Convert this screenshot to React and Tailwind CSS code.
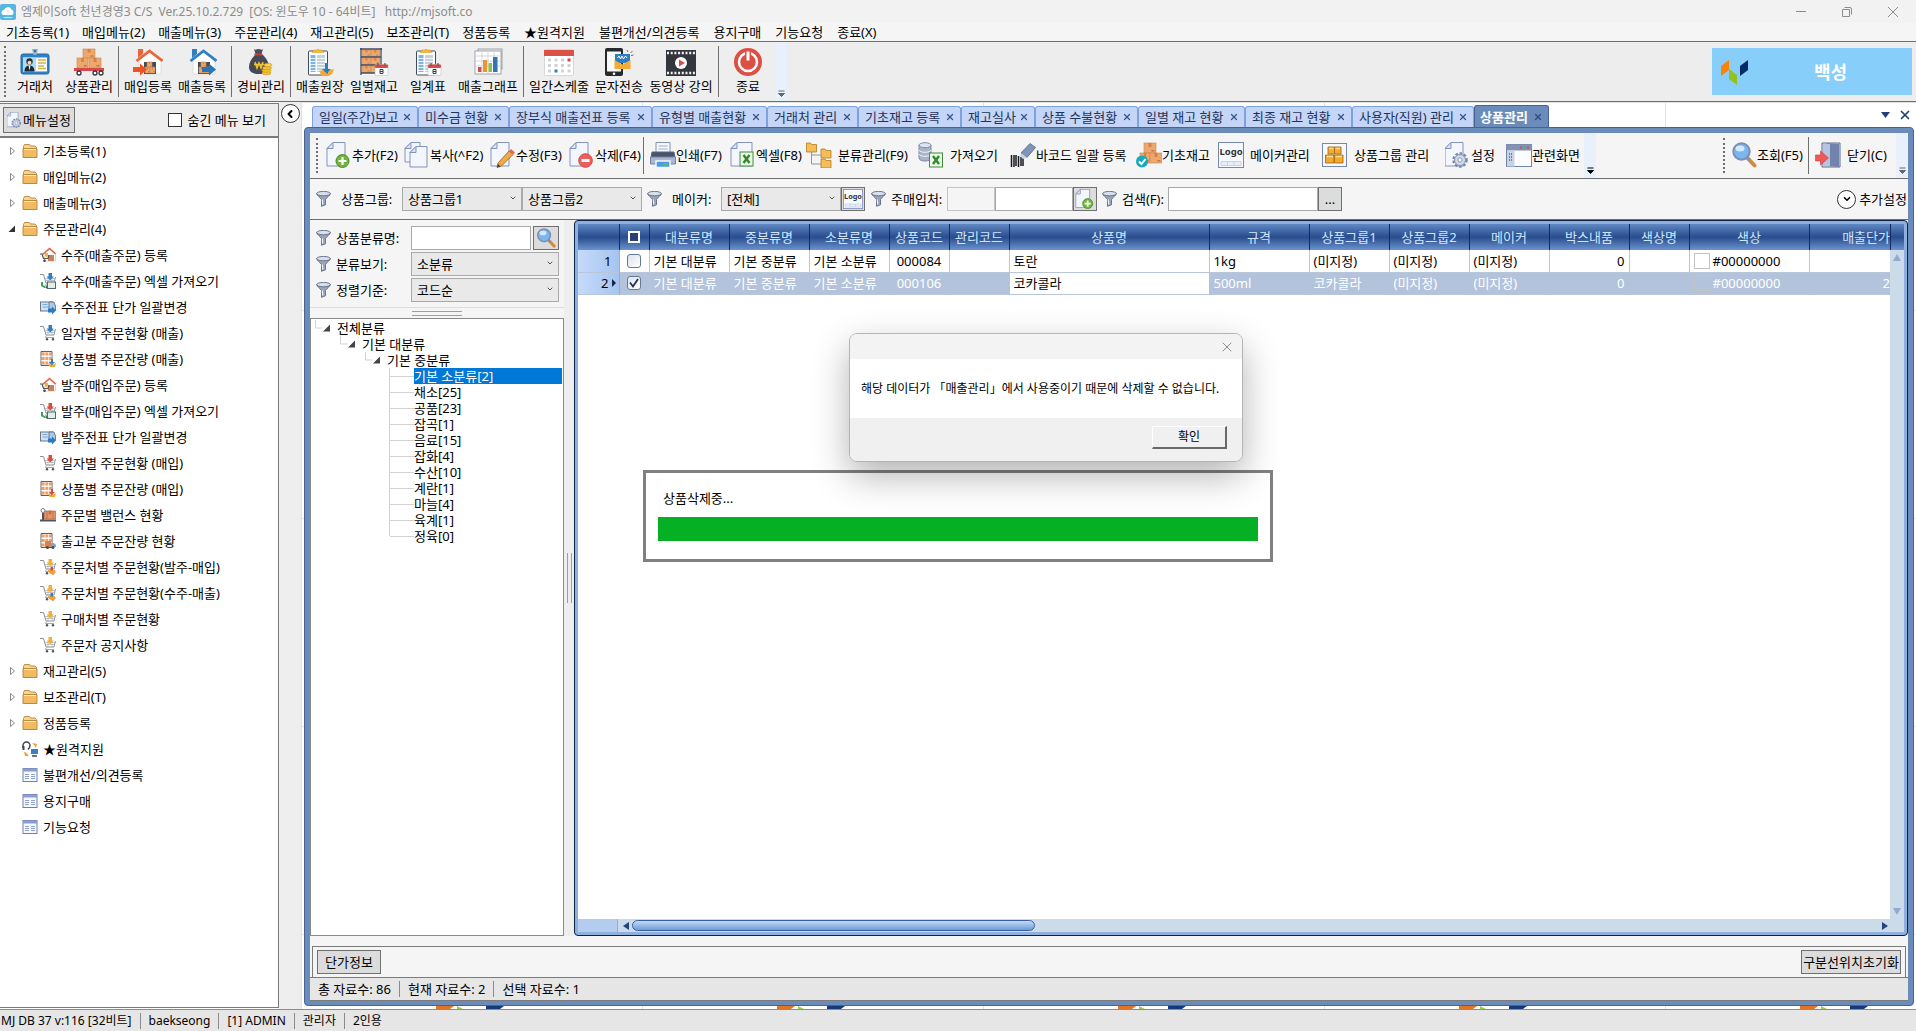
import React from 'react';
import { ChevronDown, ChevronLeft, X } from 'lucide-react';

const TITLE_MENUS = [
  { label: '기초등록(1)', gap: 'mr-[13px]' },
  { label: '매입메뉴(2)', gap: 'mr-[13px]' },
  { label: '매출메뉴(3)', gap: 'mr-[13px]' },
  { label: '주문관리(4)', gap: 'mr-[13px]' },
  { label: '재고관리(5)', gap: 'mr-[13px]' },
  { label: '보조관리(T)', gap: 'mr-[13px]' },
  { label: '정품등록', gap: 'mr-[14px]' },
  { label: '★원격지원', gap: 'mr-[14px]' },
  { label: '불편개선/의견등록', gap: 'mr-[14px]' },
  { label: '용지구매', gap: 'mr-[14px]' },
  { label: '기능요청', gap: 'mr-[14px]' },
  { label: '종료(X)', gap: 'mr-0' },
];

/* ---------- main toolbar icons (30 x 28) ---------- */

function Box({ x, y, w, h }) {
  return (
    <g>
      <rect x={x} y={y} width={w} height={h} fill="#eda86c" stroke="#c98550" strokeWidth="0.6" />
      <rect x={x + w * 0.38} y={y} width={w * 0.24} height={h * 0.4} fill="#d97f4c" />
      <rect x={x + w * 0.62} y={y + h * 0.72} width={w * 0.25} height={h * 0.12} fill="#b86a3c" />
    </g>
  );
}

function Calendar({ x, y }) {
  return (
    <g>
      <rect x={x} y={y} width="13" height="11" rx="1" fill="#fff" stroke="#b9bcc4" strokeWidth="0.6" />
      <rect x={x} y={y} width="13" height="3.5" rx="1" fill="#dc4a43" />
      <path d={`M${x + 3} ${y - 1.5}v3M${x + 10} ${y - 1.5}v3`} stroke="#555b66" strokeWidth="1.2" />
      <path d={`M${x + 5} ${y + 5}h3v4h-3zM${x + 5} ${y + 7}h3`} stroke="#3c414c" fill="none" />
    </g>
  );
}

function Clipboard() {
  return (
    <g>
      <rect x="3.5" y="3" width="19" height="24" rx="1" fill="#fff" stroke="#3d4a5f" />
      <rect x="5.5" y="7" width="5" height="17" fill="#7fb6e0" />
      <rect x="12" y="7" width="8" height="17" fill="#c6d1dc" />
      <path d="M5 10.500h16M5 13.500h16M5 16.500h16M5 19.500h16M5 22.500h16" stroke="#fff" strokeWidth="0.8" />
      <path d="M7 4.500l2-2.500h2.500a2 2 0 0 1 3 0H17l2 2.500z" fill="#f7b733" stroke="#d99519" strokeWidth="0.5" />
    </g>
  );
}

function House({ color, arrow, arrowX }) {
  return (
    <g>
      <path d="M6 12L17 3l11 9v14H6z" fill="#fff" stroke="#c9ccd1" strokeWidth="0.6" />
      <path d="M11 14h12v12H11z" fill="#434a58" />
      <Box x={12} y={19} w={5} h={6} />
      <Box x={17} y={19} w={5} h={6} />
      <Box x={14} y={14} w={5} h={5} />
      <path d="M5 1h5v5l-5 4z" fill={color} />
      <path d="M3.500 13L16.500 3l13 10" fill="none" stroke={color} strokeWidth="2.800" />
      <path d={`M${arrowX} 19h7v-3.500l7 6-7 6V24h-7z`} fill={arrow} />
    </g>
  );
}

const mainIcons = {
  card: (
    <g>
      <rect x="1" y="6" width="28" height="20" rx="2" fill="#2f83c4" stroke="#1f6aa8" />
      <rect x="3" y="9.500" width="24" height="14" fill="#f4fafd" />
      <rect x="3" y="9.500" width="13" height="14" fill="#a9dcf5" />
      <circle cx="9.500" cy="13.500" r="3.200" fill="#2b2b30" />
      <circle cx="9.500" cy="14.800" r="2" fill="#f6d3b6" />
      <path d="M4.500 23.500c0-4 2-6 5-6s5 2 5 6z" fill="#1d2833" />
      <path d="M8.500 17.500h2l-1 5z" fill="#fff" />
      <path d="M18 12h8M18 15h8M18 18h6M18 20.500h8" stroke="#d3b34c" strokeWidth="1.300" />
      <path d="M12 1h6l-1.500 6h-3z" fill="#8fb7d4" />
      <circle cx="15" cy="3" r="1.200" fill="#2f6f9f" />
    </g>
  ),
  boxes: (
    <g>
      <Box x={9} y={1} w={12} h={9} />
      <Box x={3} y={10} w={11} h={10} />
      <Box x={15} y={10} w={12} h={10} />
      <path d="M0 21.500h30" stroke="#d8484d" strokeWidth="3" />
      <circle cx="5" cy="25" r="2" fill="#fff" stroke="#33363d" strokeWidth="1.300" />
      <circle cx="21" cy="25" r="2" fill="#fff" stroke="#33363d" strokeWidth="1.300" />
      <circle cx="27" cy="25" r="2" fill="#fff" stroke="#33363d" strokeWidth="1.300" />
    </g>
  ),
  houseIn: <House color="#e9663a" arrow="#ee5328" arrowX={0} />,
  houseOut: <House color="#2f7fc1" arrow="#2477bd" arrowX={15} />,
  money: (
    <g>
      <path d="M8 1c2 1.500 3 0 4.500 0s3 1.500 4.500 0L15.500 6h-6z" fill="#4b4f5c" />
      <path d="M9 7h8c4 4 6 8 6 12 0 5-4 7-10 7S3 24 3 19c0-4 2-8 6-12z" fill="#464a57" />
      <path d="M8.500 6.500h8" stroke="#c93f3f" strokeWidth="1.800" />
      <path d="M9 14l2 6 2-5 2 5 2-6M8 16.500h10" fill="none" stroke="#f3c331" strokeWidth="1.500" />
      <ellipse cx="20.500" cy="25" rx="4.500" ry="1.800" fill="#f1c232" stroke="#c8961a" strokeWidth="0.6" />
      <ellipse cx="20.500" cy="22.500" rx="4.500" ry="1.800" fill="#f1c232" stroke="#c8961a" strokeWidth="0.6" />
      <ellipse cx="21" cy="20" rx="4.500" ry="1.800" fill="#f1c232" stroke="#c8961a" strokeWidth="0.6" />
      <ellipse cx="22" cy="17" rx="4" ry="1.800" fill="#f6d152" stroke="#c8961a" strokeWidth="0.6" />
    </g>
  ),
  ledger: (
    <g>
      <Clipboard />
      <path d="M20 15h3v6h3l-4.500 5-4.500-5h3z" fill="#2a7cc0" />
      <path d="M14 23l4-1 4 4 3-4 4-1-2 5-5 3-5-1z" fill="#f5a72f" />
    </g>
  ),
  shelf: (
    <g>
      <rect x="2" y="0.500" width="20" height="26" fill="#fff" />
      {[2, 10, 18].map((y) => (
        <g key={y}>
          <Box x={3.5} y={y} w={8} h={6.5} />
          <Box x={12} y={y} w={8.5} h={6.5} />
        </g>
      ))}
      <path d="M2 0v27M22 0v27M1 1h22M2 9h20M2 17h20M2 25h20" stroke="#3f4a5c" strokeWidth="1.300" />
      <Calendar x={16} y={16.5} />
    </g>
  ),
  daily: (
    <g>
      <Clipboard />
      <Calendar x={15} y={16.5} />
    </g>
  ),
  graph: (
    <g>
      <rect x="5" y="1" width="24" height="20" fill="#e9ebee" stroke="#8c9099" strokeWidth="0.8" />
      <rect x="2" y="3" width="26" height="23" fill="#fff" stroke="#8c9099" strokeWidth="0.8" />
      <path d="M3 8h24M3 13h24M3 18h24M9 4v21M15 4v21M21 4v21" stroke="#c9cfd8" strokeWidth="0.8" />
      <rect x="5" y="19" width="3.500" height="5" fill="#dd4b43" />
      <rect x="10" y="12" width="4" height="12" fill="#f0952e" />
      <rect x="15.500" y="15" width="3.500" height="9" fill="#8ac249" />
      <rect x="20" y="9" width="4.500" height="15" fill="#3173b5" />
    </g>
  ),
  schedule: (
    <g>
      <rect x="0.500" y="1.500" width="29" height="26" rx="1" fill="#fff" stroke="#d5d7da" />
      <path d="M0 2h30v6H0z" fill="#dd5048" />
      {[10.5, 16, 21.5].map((y, r) =>
        [4, 10.5, 17, 23.5].map((x, c) => (
          <rect
            key={`${r}${c}`}
            x={x}
            y={y}
            width="3"
            height="3"
            fill={r === 0 && c === 3 ? '#d3453e' : r === 2 && c === 1 ? '#2f7fc1' : '#cfd2d6'}
          />
        ))
      )}
    </g>
  ),
  phone: (
    <g>
      <rect x="1" y="0" width="18" height="28" rx="2" fill="#26282c" />
      <rect x="3" y="3.500" width="14" height="20" fill="#f7f9fb" />
      <circle cx="10" cy="25.800" r="1.300" fill="#fff" />
      <rect x="11" y="6" width="15" height="9" fill="#2f7cc4" />
      <path d="M10.500 12l8 4.500 8-4.500v9h-16z" fill="#f4ac34" />
      <path d="M13.500 10l1.500-2 1.500 3 1.500-3 1.500 3 2-3 1.500 2" fill="none" stroke="#fff" strokeWidth="1" />
      <path d="M24 4l-1-2M26.500 5l2-2M27 7.500l2.500-.5" stroke="#6c7078" />
    </g>
  ),
  film: (
    <g>
      <rect x="0" y="2" width="30" height="26" fill="#33363c" />
      <path d="M1 5h28M1 25h28" stroke="#f4f4f4" strokeWidth="2.500" strokeDasharray="2 1.700" />
      <circle cx="15" cy="15" r="6" fill="#fff" />
      <path d="M13 11.500l6 3.500-6 3.500z" fill="#dd4b43" />
    </g>
  ),
  power: (
    <g>
      <circle cx="15" cy="14" r="14" fill="#dd4f45" />
      <circle cx="15" cy="14" r="9" fill="none" stroke="#fff" strokeWidth="2.500" />
      <path d="M12 2h6v10h-6z" fill="#dd4f45" />
      <path d="M15 3.500v9" stroke="#fff" strokeWidth="3" />
    </g>
  ),
};

const MAIN_TOOLS = [
  [{ label: '거래처', icon: 'card', w: 'w-[54px]' }, { label: '상품관리', icon: 'boxes', w: 'w-[54px]' }],
  [{ label: '매입등록', icon: 'houseIn', w: 'w-[54px]' }, { label: '매출등록', icon: 'houseOut', w: 'w-[54px]' }],
  [{ label: '경비관리', icon: 'money', w: 'w-[54px]' }],
  [
    { label: '매출원장', icon: 'ledger', w: 'w-[54px]' },
    { label: '일별재고', icon: 'shelf', w: 'w-[54px]' },
    { label: '일계표', icon: 'daily', w: 'w-[54px]' },
    { label: '매출그래프', icon: 'graph', w: 'w-[66px]' },
  ],
  [
    { label: '일간스케줄', icon: 'schedule', w: 'w-[66px]' },
    { label: '문자전송', icon: 'phone', w: 'w-[54px]' },
    { label: '동영상 강의', icon: 'film', w: 'w-[70px]' },
  ],
  [{ label: '종료', icon: 'power', w: 'w-[54px]' }],
];

/* ---------- document toolbar icons (26 x 26) ---------- */

function Page({ x = 1, y = 0, w = 18, h = 24 }) {
  return (
    <g>
      <path
        d={`M${x + 6} ${y + 0.5}H${x + w}V${y + h}H${x}V${y + 6.5}z`}
        fill="#f3f6fc"
        stroke="#8493bd"
      />
      <path d={`M${x + 6} ${y + 0.5}v6h-6z`} fill="#dbe3f3" stroke="#8493bd" />
    </g>
  );
}

function ExcelBadge({ x, y }) {
  return (
    <g>
      <rect x={x} y={y} width="13" height="14" fill="#eef8ea" stroke="#3f8f35" />
      <path d={`M${x + 3.5} ${y + 3}l6 8M${x + 9.5} ${y + 3}l-6 8`} stroke="#2f8a2a" strokeWidth="2.400" />
    </g>
  );
}

function FolderShape({ x, y }) {
  return (
    <path
      d={`M${x} ${y}h4l1 1.500h5v7.500h-10z`}
      fill="#f4bd55"
      stroke="#b47a26"
      strokeWidth="0.8"
    />
  );
}

function Gear({ cx, cy, r }) {
  return (
    <g>
      <circle cx={cx} cy={cy} r={r} fill="none" stroke="#7787ab" strokeWidth="2.500" strokeDasharray="2.500 1.700" />
      <circle cx={cx} cy={cy} r={r - 1} fill="#d3daea" stroke="#8291b3" />
      <circle cx={cx} cy={cy} r={r / 3} fill="#fff" stroke="#8291b3" />
    </g>
  );
}

function Lens() {
  return (
    <g>
      <path d="M17 16.500l6.500 7" stroke="#d8893a" strokeWidth="4" strokeLinecap="round" />
      <path d="M16 15.500l3 3" stroke="#8892a8" strokeWidth="3" />
      <circle cx="10.500" cy="9.500" r="8.200" fill="#79b7ee" stroke="#7d8fb6" strokeWidth="2" />
      <ellipse cx="9" cy="6.500" rx="4.500" ry="3" fill="#e3f3ff" opacity="0.85" />
    </g>
  );
}

function LogoSheet() {
  return (
    <g>
      <rect x="0.500" y="0.500" width="25" height="25" fill="#f7f9fd" stroke="#7786ae" />
      <path d="M3 19.500h20v4H3zM9.500 19.500v4M16 19.500v4" fill="#e7eefa" stroke="#c5d2ea" />
      <text x="13" y="13" textAnchor="middle" fontSize="9.500" fontWeight="700" fill="#333">
        Logo
      </text>
    </g>
  );
}

const docIcons = {
  add: (
    <g>
      <Page />
      <circle cx="16.500" cy="19" r="6.500" fill="#6fb53a" stroke="#4b8d25" />
      <path d="M16.500 15v8M12.500 19h8" stroke="#fff" strokeWidth="2.200" />
    </g>
  ),
  copy: (
    <g>
      <Page x={1} y={0} w={15} h={20} />
      <Page x={6} y={4} w={17} h={21} />
    </g>
  ),
  edit: (
    <g>
      <Page />
      <path d="M8 21L19 9l4 3.500L11.500 24 7 25.500z" fill="#f0a848" stroke="#a86a2b" strokeWidth="0.9" />
      <path d="M19 9l2-2 4 3.500-2 2z" fill="#e06b52" />
      <path d="M7 25.500l1-3.500 2.500 2.500z" fill="#4a3a2c" />
    </g>
  ),
  remove: (
    <g>
      <Page />
      <circle cx="16.500" cy="18.500" r="6.800" fill="#ee5f5b" stroke="#d04846" />
      <path d="M12.500 18.500h8" stroke="#fff" strokeWidth="3" />
    </g>
  ),
  print: (
    <g>
      <path d="M6 0.500h14v11H6z" fill="#f5f8fd" stroke="#8593b5" />
      <path d="M8.500 4h9M8.500 7h9" stroke="#a4afc8" />
      <path d="M2 10h22l1.500 9h-25z" fill="#4a5468" stroke="#59657f" />
      <path d="M0.500 15h25v7h-25z" fill="#a9b7d3" stroke="#74829f" />
      <path d="M6 19h14v6.500H6z" fill="#4f9be2" stroke="#f4f7fb" strokeWidth="1.500" />
      <path d="M13 21h5v3h-5z" fill="#5cb27a" />
    </g>
  ),
  excel: (
    <g>
      <Page x={1} y={0} w={21} h={24} />
      <ExcelBadge x={10} y={10} />
    </g>
  ),
  tree: (
    <g>
      <path d="M5.500 10v12H16M5.500 13H16" fill="none" stroke="#8b93a5" />
      <FolderShape x={0.5} y={1} />
      <FolderShape x={15} y={7} />
      <FolderShape x={15} y={17} />
    </g>
  ),
  db: (
    <g>
      <path d="M1 3v13c0 4 12 4 12 0V3z" fill="#a9b4c9" stroke="#7f8ba6" />
      <ellipse cx="7" cy="3.200" rx="6" ry="2.500" fill="#dde4f0" stroke="#7f8ba6" />
      <path d="M1 8c0 3 12 3 12 0M1 12c0 3 12 3 12 0" fill="none" stroke="#f2f5fa" />
      <ExcelBadge x={11.5} y={11} />
    </g>
  ),
  barcode: (
    <g>
      <path d="M1.500 13v12M4 13v12M6 13v11M8.500 14v11M11 15v9M13 16v8" stroke="#17191d" strokeWidth="1.500" />
      <path d="M11 11L20 1.500l5.500 4-8.500 10z" fill="#8094bb" stroke="#667899" />
      <path d="M11 11l6 4.500-4 1.500-3-3z" fill="#c9d2e4" />
    </g>
  ),
  stock: (
    <g>
      <Box x={8} y={1} w={12} h={10} />
      <Box x={4} y={11} w={10} h={10} />
      <Box x={14} y={11} w={12} h={10} />
      <circle cx="6" cy="19.500" r="6" fill="#17a9c2" />
      <path d="M3 19.500l2.500 2.500L9.500 17" fill="none" stroke="#fff" strokeWidth="2" />
    </g>
  ),
  logo: <LogoSheet />,
  group: (
    <g>
      <rect x="0.500" y="1.500" width="24" height="23" fill="#f7f9fd" stroke="#7786ae" />
      <path d="M6 5h6.500v7H6zM12.500 5H19v7h-6.500zM3.500 13h8.500v8H3.500zM12.500 13H21v8h-8.500z" fill="#f2ab2e" stroke="#a96b15" strokeWidth="0.9" />
      <path d="M7 6.500h4.500M13.500 6.500H18M4.500 14.500h6.500M13.500 14.500H20" stroke="#fbdc8e" strokeWidth="1.300" />
    </g>
  ),
  setting: (
    <g>
      <Page x={0} />
      <Gear cx={15} cy={18} r={6.5} />
    </g>
  ),
  screen: (
    <g>
      <rect x="0.500" y="2.500" width="25" height="22" fill="#fbfdff" stroke="#7283a8" />
      <rect x="0.500" y="2.500" width="25" height="6" fill="#8393b5" />
      <rect x="1" y="8.500" width="7.500" height="16" fill="#c9d3e6" />
      <path d="M3 12h4M3 15h4M3 18h4" stroke="#54617f" strokeWidth="1.500" strokeDasharray="1 1" />
      <circle cx="15" cy="5.500" r="1.200" fill="#d9524b" />
      <circle cx="18.500" cy="5.500" r="1.200" fill="#5cb15a" />
      <circle cx="22" cy="5.500" r="1.200" fill="#d9524b" />
    </g>
  ),
  search: <Lens />,
  exit: (
    <g>
      <path d="M7 1h18v24H7z" fill="#dfe5f2" stroke="#5d6b90" />
      <path d="M12 1l12 1v23l-12-1z" fill="#7182ab" />
      <path d="M8 2h7v22H8z" fill="#b7c3df" />
      <path d="M0.500 13h5V9l8 7-8 7v-4h-5z" fill="#ee5856" stroke="#cf3f3e" strokeWidth="0.6" />
    </g>
  ),
};

const DOC_TOOLS = [
  { label: '추가(F2)', icon: 'add', w: 'w-[78px]' },
  { label: '복사(^F2)', icon: 'copy', w: 'w-[86px]' },
  { label: '수정(F3)', icon: 'edit', w: 'w-[79px]' },
  { label: '삭제(F4)', icon: 'remove', w: 'w-[74px]', sep: true },
  { label: '인쇄(F7)', icon: 'print', w: 'w-[80px]' },
  { label: '엑셀(F8)', icon: 'excel', w: 'w-[76px]' },
  { label: '분류관리(F9)', icon: 'tree', w: 'w-[112px]', wide: true },
  { label: '가져오기', icon: 'db', w: 'w-[92px]', wide: true },
  { label: '바코드 일괄 등록', icon: 'barcode', w: 'w-[126px]' },
  { label: '기초재고', icon: 'stock', w: 'w-[82px]' },
  { label: '메이커관리', icon: 'logo', w: 'w-[104px]', wide: true },
  { label: '상품그룹 관리', icon: 'group', w: 'w-[123px]', wide: true },
  { label: '설정', icon: 'setting', w: 'w-[61px]' },
  { label: '관련화면', icon: 'screen', w: 'w-[78px]' },
];

/* ---------- side menu icons (16 x 16) ---------- */

function Cart({ arrow }) {
  return (
    <g>
      <path d="M0 1.500h3.500l2.500 8.500h8l1.500-6" fill="none" stroke="#8a919c" />
      <path d="M5 5.500h10M5.500 7.500h9M8 5v5M12 5v5" stroke="#a9afb8" strokeWidth="0.7" />
      <path d="M6.500 10.500L5.500 12.500H14" fill="none" stroke="#8a919c" strokeWidth="0.8" />
      <circle cx="7" cy="14.200" r="1.200" fill="#4c525c" />
      <circle cx="13" cy="14.200" r="1.200" fill="#4c525c" />
      <path d="M8.500 0h3.500v3.500h2L10.200 7.500 6.500 3.500h2z" fill={arrow} />
    </g>
  );
}

function Rack() {
  return (
    <g>
      <path d="M1 0.500h11v14H1z" fill="#fbe9dc" stroke="#5a6271" />
      <path d="M2 1.500h9v3H2zM2 6h9v3H2zM2 10.500h9v3H2z" fill="#eea06b" />
      <path d="M1 5.200h11M1 9.700h11M5 1v13M8.500 1v13" stroke="#fff" strokeWidth="0.7" />
    </g>
  );
}

const menuIcons = {
  folder: (
    <g>
      <path d="M1.500 3.500l1-2h5l1 1.500h4.500l1.500 1.500V14h-13z" fill="#f8d68f" stroke="#b98238" strokeWidth="0.9" />
      <path d="M1 5.500h14v9H1z" fill="#f0bb62" stroke="#b98238" strokeWidth="0.9" />
      <path d="M2 6.500h12" stroke="#fdeac1" />
    </g>
  ),
  houseCart: (
    <g>
      <path d="M4 7l6-5 5.500 5v7H5z" fill="#fff" stroke="#c3c7cc" strokeWidth="0.7" />
      <path d="M2.500 7.500L9.500 1.500l6 5.500" fill="none" stroke="#e56142" strokeWidth="1.600" />
      <path d="M8 8h6v6H8z" fill="#c98157" />
      <path d="M0 7h2l1.500 4.500h4.500L9 8" fill="none" stroke="#4f5560" strokeWidth="1.200" />
      <circle cx="4.500" cy="13.800" r="1.300" fill="#3e434c" />
      <path d="M5 6h3v3l-1.500 1.500L5 9z" fill="#f4b23a" />
    </g>
  ),
  excelSale: (
    <g>
      <Cart arrow="#2f7fc1" />
      <rect x="7.500" y="9" width="8" height="6.500" fill="#dff0e4" stroke="#58656b" />
      <path d="M2 9v3.500l3.500 2" fill="none" stroke="#35a457" strokeWidth="2" />
    </g>
  ),
  excelBuy: (
    <g>
      <Cart arrow="#dc4b3e" />
      <rect x="7.500" y="9" width="8" height="6.500" fill="#dff0e4" stroke="#58656b" />
      <path d="M2 9v3.500l3.500 2" fill="none" stroke="#35a457" strokeWidth="2" />
    </g>
  ),
  price: (
    <g>
      <rect x="0.500" y="3" width="12" height="9" fill="#cfe3f6" stroke="#6c7684" />
      <path d="M2.500 5.500h5M2.500 8h6" stroke="#7aa9d6" />
      <path d="M9 3h5l1.500 4v4.500H9z" fill="#a9c9e8" stroke="#5d6673" strokeWidth="0.8" />
      <path d="M8 9.500h4V7.500l4 4-4 4V13.500H8z" fill="#2a79c2" />
    </g>
  ),
  cartSale: <Cart arrow="#2f7fc1" />,
  cartBuy: <Cart arrow="#dc4b3e" />,
  cartYellow: <Cart arrow="#f5b02f" />,
  cartHandRed: (
    <g>
      <Cart arrow="#f5b02f" />
      <path d="M8 11l3-1 3.500 1 1.500 2-3 3-4-2z" fill="#f2a03a" />
      <path d="M10.500 8h2.500v3.500h-2.500z" fill="#dc4b3e" />
    </g>
  ),
  cartHandBlue: (
    <g>
      <Cart arrow="#f5b02f" />
      <path d="M8 11l3-1 3.500 1 1.500 2-3 3-4-2z" fill="#f2a03a" />
      <path d="M10.500 8h2.500v3.500h-2.500z" fill="#2f7fc1" />
    </g>
  ),
  rackSale: (
    <g>
      <Rack />
      <path d="M11 8h2v3h2l-3 3-3-3h2z" fill="#2f7fc1" />
      <path d="M8 13l4 1.500 4-2.500-1 4h-5z" fill="#f5a72f" />
    </g>
  ),
  rackBuy: (
    <g>
      <Rack />
      <path d="M11 8h2v3h2l-3 3-3-3h2z" fill="#dc4b3e" />
      <path d="M8 13l4 1.500 4-2.500-1 4h-5z" fill="#f5a72f" />
    </g>
  ),
  balance: (
    <g>
      <path d="M4.500 4h11v8h-11z" fill="#e3966a" stroke="#b3663e" strokeWidth="0.7" />
      <path d="M9 4h2v3H9zM7 4v8M13 4v8" stroke="#c4734a" fill="#c4734a" />
      <circle cx="3" cy="3.500" r="2" fill="#fff" stroke="#777e8a" />
      <path d="M3 6v7M0 13.500h16" stroke="#4e5562" strokeWidth="2" />
    </g>
  ),
  rackTruck: (
    <g>
      <Rack />
      <path d="M5 8h6v6H5z" fill="#de8150" />
      <path d="M11 10h3l2 2v2h-5z" fill="#7fa8c8" />
      <circle cx="7.500" cy="14.500" r="1.500" fill="#434953" />
      <circle cx="13" cy="14.500" r="1.500" fill="#434953" />
    </g>
  ),
  remote: (
    <g>
      <path d="M1 7V4.500a3.500 3.500 0 0 1 7 0c0 2-1 3-2 4" fill="none" stroke="#3e4450" strokeWidth="1.500" />
      <path d="M0.500 5h2v4h-2z" fill="#3e4450" />
      <path d="M10 2l5 1-1 4-1.500-2.500z" fill="#f2a03a" />
      <path d="M2 11l2 .5L7 15H3z" fill="#f2a03a" />
      <rect x="9" y="8" width="7" height="5" fill="#3b7fc0" />
      <path d="M10 15h5" stroke="#3e4450" strokeWidth="1.500" />
    </g>
  ),
  window: (
    <g>
      <rect x="1" y="1.500" width="14" height="13" fill="#f6f9ff" stroke="#6d80b4" />
      <rect x="1" y="1.500" width="14" height="3" fill="#8c9ecb" />
      <path d="M3 7.500h4M3 9.500h4M3 11.500h4M9 7.500h4M9 9.500h4M9 11.500h4" stroke="#8fa0c9" />
    </g>
  ),
};

const SIDE_MENU = [
  { label: '기초등록(1)', icon: 'folder', state: 'closed' },
  { label: '매입메뉴(2)', icon: 'folder', state: 'closed' },
  { label: '매출메뉴(3)', icon: 'folder', state: 'closed' },
  {
    label: '주문관리(4)',
    icon: 'folder',
    state: 'open',
    children: [
      { label: '수주(매출주문) 등록', icon: 'houseCart' },
      { label: '수주(매출주문) 엑셀 가져오기', icon: 'excelSale' },
      { label: '수주전표 단가 일괄변경', icon: 'price' },
      { label: '일자별 주문현황 (매출)', icon: 'cartSale' },
      { label: '상품별 주문잔량 (매출)', icon: 'rackSale' },
      { label: '발주(매입주문) 등록', icon: 'houseCart' },
      { label: '발주(매입주문) 엑셀 가져오기', icon: 'excelBuy' },
      { label: '발주전표 단가 일괄변경', icon: 'price' },
      { label: '일자별 주문현황 (매입)', icon: 'cartBuy' },
      { label: '상품별 주문잔량 (매입)', icon: 'rackBuy' },
      { label: '주문별 밸런스 현황', icon: 'balance' },
      { label: '출고분 주문잔량 현황', icon: 'rackTruck' },
      { label: '주문처별 주문현황(발주-매입)', icon: 'cartHandRed' },
      { label: '주문처별 주문현황(수주-매출)', icon: 'cartHandBlue' },
      { label: '구매처별 주문현황', icon: 'cartYellow' },
      { label: '주문자 공지사항', icon: 'cartYellow' },
    ],
  },
  { label: '재고관리(5)', icon: 'folder', state: 'closed' },
  { label: '보조관리(T)', icon: 'folder', state: 'closed' },
  { label: '정품등록', icon: 'folder', state: 'closed' },
  { label: '★원격지원', icon: 'remote' },
  { label: '불편개선/의견등록', icon: 'window' },
  { label: '용지구매', icon: 'window' },
  { label: '기능요청', icon: 'window' },
];

const TABS = [
  { label: '일일(주간)보고', w: 'w-[106px]' },
  { label: '미수금 현황', w: 'w-[91px]' },
  { label: '장부식 매출전표 등록', w: 'w-[143px]' },
  { label: '유형별 매출현황', w: 'w-[115px]' },
  { label: '거래처 관리', w: 'w-[91px]' },
  { label: '기초재고 등록', w: 'w-[103px]' },
  { label: '재고실사', w: 'w-[74px]' },
  { label: '상품 수불현황', w: 'w-[103px]' },
  { label: '일별 재고 현황', w: 'w-[107px]' },
  { label: '최종 재고 현황', w: 'w-[107px]' },
  { label: '사용자(직원) 관리', w: 'w-[122px]' },
];

const CATEGORIES = [
  '기본 소분류[2]', '채소[25]', '공품[23]', '잡곡[1]', '음료[15]', '잡화[4]',
  '수산[10]', '계란[1]', '마늘[4]', '육계[1]', '정육[0]',
];

const COLUMNS = [
  { label: '대분류명', w: 'w-[80px]' },
  { label: '중분류명', w: 'w-[80px]' },
  { label: '소분류명', w: 'w-[80px]' },
  { label: '상품코드', w: 'w-[60px]', align: 'text-center' },
  { label: '관리코드', w: 'w-[60px]' },
  { label: '상품명', w: 'w-[200px]' },
  { label: '규격', w: 'w-[100px]' },
  { label: '상품그룹1', w: 'w-[80px]' },
  { label: '상품그룹2', w: 'w-[80px]' },
  { label: '메이커', w: 'w-[80px]' },
  { label: '박스내품', w: 'w-[80px]', align: 'text-right' },
  { label: '색상명', w: 'w-[60px]' },
  { label: '색상', w: 'w-[120px]', color: true },
];

const ROWS = [
  { cells: ['기본 대분류', '기본 중분류', '기본 소분류', '000084', '', '토란', '1kg', '(미지정)', '(미지정)', '(미지정)', '0', '', '#00000000'], price: '' },
  { cells: ['기본 대분류', '기본 중분류', '기본 소분류', '000106', '', '코카콜라', '500ml', '코카콜라', '(미지정)', '(미지정)', '0', '', '#00000000'], price: '2' },
];

function Grip({ className }) {
  return <div className={`w-0 border-l-2 border-dotted border-[#6f6f6f] ${className}`} />;
}

function Overflow({ dark }) {
  return (
    <div className="flex w-3 flex-col items-center justify-end rounded-r bg-[#e8f1fb] pb-1">
      <svg viewBox="0 0 7 7" className={dark ? 'h-[7px] w-[7px] text-black' : 'h-[7px] w-[7px] text-[#666]'}>
        <path d="M0.500 1h6M0.500 3.500h6l-3 3z" stroke="currentColor" strokeWidth="1" fill="currentColor" />
      </svg>
    </div>
  );
}

function Funnel() {
  return (
    <svg viewBox="0 0 15 16" className="h-4 w-[15px] shrink-0">
      <path d="M0.700 2.500c0 2 3.800 4 4.800 6v6.800l4-1.500V8.500c1-2 4.800-4 4.800-6z" fill="#9aa5bb" stroke="#5f6b84" strokeWidth="0.9" />
      <path d="M6.300 8.500l.4 5" stroke="#eef2f8" strokeWidth="1.200" />
      <ellipse cx="7.500" cy="2.600" rx="6.800" ry="2.200" fill="#d9dfeb" stroke="#5f6b84" strokeWidth="0.9" />
    </svg>
  );
}

function SelectBox({ id, label, value, className }) {
  return (
    <div className={`relative h-6 ${className}`}>
      <select
        id={id}
        aria-label={label}
        className="h-6 w-full appearance-none border border-[#a9a9a9] bg-[#e9e9e9] pl-[5px] text-[13px] leading-5 text-black"
      >
        <option>{value}</option>
      </select>
      <ChevronDown className="pointer-events-none absolute right-[5px] top-[7px] h-2 w-2 text-[#555]" strokeWidth={3} />
    </div>
  );
}

function MainToolbar() {
  return (
    <div className="flex h-[60px] shrink-0 justify-between border-b border-[#6e6e6e] bg-[#ededed]">
      <div className="flex bg-[#eeeeee]">
        <Grip className="my-1 ml-1 mr-[2px]" />
        {MAIN_TOOLS.map((group, i) => (
          <React.Fragment key={i}>
            {i > 0 && <div className="mx-[2px] my-1 w-px bg-[#6f6f6f]" />}
            {group.map((tool) => (
              <button key={tool.label} className={`flex flex-col items-center pt-[6px] ${tool.w}`}>
                <svg viewBox="0 0 30 28" className="h-[28px] w-[30px]">{mainIcons[tool.icon]}</svg>
                <span className="mt-[2px] whitespace-nowrap text-[13px] leading-4">{tool.label}</span>
              </button>
            ))}
          </React.Fragment>
        ))}
        <Overflow />
      </div>
      <div className="mr-1 mt-[6px] flex h-[47px] w-[200px] items-center bg-[#87cefa] pl-2">
        <svg viewBox="0 0 29 26" className="h-[26px] w-[29px]">
          <path d="M1 7l8-6v10l-8 6z" fill="#ff8200" />
          <path d="M9 10l8 6v10l-8-6z" fill="#93c120" />
          <path d="M20 7l8-6v10l-8 6z" fill="#002a68" />
        </svg>
        <span className="flex-1 text-center text-lg font-bold text-white">백성</span>
      </div>
    </div>
  );
}

function MenuRow({ item, child }) {
  return (
    <li>
      <button className={`flex h-[26px] w-full items-center text-left ${child ? 'pl-10' : 'pl-2'}`}>
        {!child && (
          <svg viewBox="0 0 8 8" className="mr-[6px] h-2 w-2">
            {item.state === 'closed' && <path d="M2.500 0.500v7l4-3.500z" fill="#fff" stroke="#8c8c8c" />}
            {item.state === 'open' && <path d="M0.500 7h6.500V0.500z" fill="#333" />}
          </svg>
        )}
        <svg viewBox="0 0 16 16" className="h-4 w-4 shrink-0">{menuIcons[item.icon]}</svg>
        <span className="ml-[5px] whitespace-nowrap text-[13px] leading-4">{item.label}</span>
      </button>
      {item.children && (
        <ul>
          {item.children.map((c) => (
            <MenuRow key={c.label} item={c} child />
          ))}
        </ul>
      )}
    </li>
  );
}

function SidePanel() {
  return (
    <aside className="my-px flex w-[279px] shrink-0 flex-col border-b border-r border-t border-[#7b7b7b] bg-white">
      <div className="flex h-[34px] shrink-0 items-center justify-between border-b-2 border-[#7b7b7b] bg-[#ededed] pl-[3px] pr-3">
        <button className="flex h-[26px] items-center border border-[#707070] bg-[#dcdcdc] px-[3px] text-[13px] leading-4">
          <svg viewBox="0 0 26 26" className="h-4 w-4">{docIcons.setting}</svg>
          메뉴설정
        </button>
        <label className="flex items-center gap-[5px] text-[13px] leading-4">
          <input type="checkbox" className="h-[14px] w-[14px] appearance-none border border-[#333] bg-white" />
          숨긴 메뉴 보기
        </label>
      </div>
      <ul className="min-h-0 flex-1 overflow-hidden">
        {SIDE_MENU.map((item) => (
          <MenuRow key={item.label} item={item} />
        ))}
      </ul>
    </aside>
  );
}

function TabStrip() {
  return (
    <div className="flex h-[25px] shrink-0 items-end justify-between pl-[11px]">
      <div className="flex items-end">
        {TABS.map((tab) => (
          <button
            key={tab.label}
            className={`flex h-[21px] items-center justify-between whitespace-nowrap rounded-t-[3px] border border-b-0 border-[#7da2e0] bg-[#c4d5f8] pb-px pl-[6px] pr-[5px] text-[13px] leading-4 text-[#1f3357] ${tab.w}`}
          >
            {tab.label}
            <X className="h-[10px] w-[10px] text-[#35548c]" strokeWidth={3} />
          </button>
        ))}
        <button className="flex h-[22px] w-[75px] items-center justify-between rounded-t-[3px] border border-b-0 border-[#46648f] bg-[#6b8cba] px-[5px] text-[13px] font-bold leading-4 text-white">
          상품관리
          <X className="h-[10px] w-[10px] text-[#2d4a80]" strokeWidth={3} />
        </button>
      </div>
      <div className="flex h-full items-center gap-2 pr-1 text-[#23427c]">
        <svg viewBox="0 0 9 6" className="h-[6px] w-[9px]"><path d="M0 0h9L4.500 6z" fill="currentColor" /></svg>
        <X className="h-[14px] w-[14px]" strokeWidth={3} />
      </div>
    </div>
  );
}

function DocButton({ tool }) {
  return (
    <button className={`flex items-center whitespace-nowrap pb-[2px] text-[13px] leading-4 ${tool.wide ? 'gap-[6px]' : 'gap-0'} ${tool.w}`}>
      <svg viewBox="0 0 26 26" className="h-[26px] w-[26px] shrink-0">{docIcons[tool.icon]}</svg>
      {tool.label}
    </button>
  );
}

function DocToolbar() {
  return (
    <div className="flex h-[46px] shrink-0 justify-between border-b border-[#6e6e6e] bg-[#f5f5f5]">
      <div className="flex">
        <Grip className="my-[5px] ml-[6px] mr-2" />
        {DOC_TOOLS.map((tool) => (
          <React.Fragment key={tool.label}>
            <DocButton tool={tool} />
            {tool.sep && <div className="my-1 mr-[6px] w-px bg-[#6f6f6f]" />}
          </React.Fragment>
        ))}
        <Overflow dark />
      </div>
      <div className="flex">
        <Grip className="my-[5px] mr-[6px]" />
        <DocButton tool={{ label: '조회(F5)', icon: 'search', w: 'w-[77px]' }} />
        <div className="my-1 mr-[6px] w-px bg-[#6f6f6f]" />
        <DocButton tool={{ label: '닫기(C)', icon: 'exit', w: 'w-[81px]', wide: true }} />
        <Overflow />
      </div>
    </div>
  );
}

function FilterBar() {
  return (
    <div className="flex h-[41px] shrink-0 items-center border-b border-[#6e6e6e] bg-[#f5f5f5] pl-[6px] text-[13px] leading-4">
      <Funnel />
      <label htmlFor="group1" className="w-[71px] whitespace-nowrap pl-[10px]">상품그룹:</label>
      <SelectBox id="group1" value="상품그룹1" className="w-[120px]" />
      <SelectBox label="상품그룹2" value="상품그룹2" className="mr-[5px] w-[120px]" />
      <Funnel />
      <label htmlFor="maker" className="w-[59px] whitespace-nowrap pl-[10px]">메이커:</label>
      <SelectBox id="maker" value="[전체]" className="w-[120px]" />
      <button className="mr-[6px] flex h-6 w-6 items-center justify-center border border-[#707070] bg-[#dcdcdc]" aria-label="메이커 로고">
        <svg viewBox="0 0 26 26" className="h-5 w-5">{docIcons.logo}</svg>
      </button>
      <Funnel />
      <label htmlFor="vendor" className="w-[61px] whitespace-nowrap pl-[5px]">주매입처:</label>
      <input id="vendor" readOnly className="h-6 w-12 border border-[#c3c3c3] bg-[#f5f5f5]" />
      <input aria-label="주매입처명" className="h-6 w-[78px] border border-[#a9a9a9] bg-white" />
      <button className="mr-[5px] flex h-6 w-6 items-center justify-center border border-[#707070] bg-[#dcdcdc]" aria-label="주매입처 추가">
        <svg viewBox="0 0 26 26" className="h-5 w-5">{docIcons.add}</svg>
      </button>
      <Funnel />
      <label htmlFor="keyword" className="w-[51px] whitespace-nowrap pl-[5px]">검색(F):</label>
      <input id="keyword" className="h-6 w-[150px] border border-[#a9a9a9] bg-white" />
      <button className="h-6 w-6 border border-[#707070] bg-[#dcdcdc]">...</button>
      <button className="ml-auto flex items-center gap-[3px] pr-px">
        <span className="flex h-[19px] w-[19px] items-center justify-center rounded-full border border-[#333] bg-white">
          <ChevronDown className="h-[10px] w-[10px]" strokeWidth={4} />
        </span>
        추가설정
      </button>
    </div>
  );
}

function TreeArrow() {
  return (
    <svg viewBox="0 0 20 16" className="h-4 w-5">
      <path d="M4.500 0v8h7" fill="none" stroke="#d2d2d2" />
      <path d="M12 11.500h7V4.500z" fill="#444" />
    </svg>
  );
}

function CategoryPanel() {
  return (
    <div className="flex w-[254px] shrink-0 flex-col bg-[#f5f5f5]">
      <div className="flex flex-col gap-[2px] pb-[5px] pl-[6px] pr-[5px] pt-[6px] text-[13px] leading-4">
        <div className="flex items-center">
          <Funnel />
          <label htmlFor="catName" className="w-20 whitespace-nowrap pl-[5px]">상품분류명:</label>
          <input id="catName" className="h-6 min-w-0 flex-1 border border-[#a9a9a9] bg-white" />
          <button className="ml-[2px] flex h-6 w-[26px] items-center justify-center border border-[#707070] bg-[#dcdcdc]" aria-label="분류 검색">
            <svg viewBox="0 0 26 26" className="h-5 w-5">{docIcons.search}</svg>
          </button>
        </div>
        <div className="flex items-center">
          <Funnel />
          <label htmlFor="catView" className="w-20 pl-[5px]">분류보기:</label>
          <SelectBox id="catView" value="소분류" className="flex-1" />
        </div>
        <div className="flex items-center">
          <Funnel />
          <label htmlFor="catSort" className="w-20 pl-[5px]">정렬기준:</label>
          <SelectBox id="catSort" value="코드순" className="flex-1" />
        </div>
      </div>
      <div className="flex h-[11px] items-center justify-center border-t border-[#dcdcdc]">
        <div className="h-[5px] w-[50px] border-y border-[#9f9f9f]" />
      </div>
      <div className="min-h-0 flex-1 overflow-hidden border border-[#8a8a8a] bg-white pr-px pt-px text-[13px] leading-4">
        <div className="flex items-center"><TreeArrow /><span className="pl-[6px]">전체분류</span></div>
        <div className="flex items-center pl-[25px]"><TreeArrow /><span className="pl-[6px]">기본 대분류</span></div>
        <div className="flex items-center pl-[50px]"><TreeArrow /><span className="pl-[6px]">기본 중분류</span></div>
        <ul className="pl-[78px]">
          {CATEGORIES.map((cat, i) => (
            <li key={cat} className="flex h-4">
              <span className={`w-px bg-[#d2d2d2] ${i === CATEGORIES.length - 1 ? 'h-2' : 'h-4'}`} />
              <span className="mt-2 h-px w-6 bg-[#d2d2d2]" />
              <span className={`flex-1 ${i === 0 ? 'bg-[#0078d7] text-white' : ''}`}>{cat}</span>
            </li>
          ))}
        </ul>
      </div>
    </div>
  );
}

const HEAD_BG = 'bg-linear-to-b from-[#6089c4] via-[#2a4c8d] via-50% to-[#6b93cd]';

function RowCheck({ checked, label }) {
  return (
    <label className="relative mx-auto block h-[14px] w-[14px]">
      <input
        type="checkbox"
        aria-label={label}
        defaultChecked={checked}
        className="peer block h-[14px] w-[14px] appearance-none rounded-[3px] border border-[#66789c] bg-linear-to-br from-[#dce2ec] to-white"
      />
      <svg viewBox="0 0 14 14" className="pointer-events-none absolute left-0 top-0 hidden h-[14px] w-[14px] peer-checked:block">
        <path d="M3 6.500l3 4 5-7.500" fill="none" stroke="#1f2f55" strokeWidth="1.800" />
      </svg>
    </label>
  );
}

function ProductGrid() {
  return (
    <div className="flex min-w-0 flex-1 flex-col rounded-[4px] border border-[#0d2347] bg-[#8fb0de] p-[3px]">
      <div className="flex min-h-0 flex-1 bg-white">
        <div className="min-w-0 flex-1 overflow-hidden">
          <table className="w-full table-fixed border-collapse text-[13px] leading-4">
            <thead>
              <tr className={`h-[26px] text-[#cfe6fb] ${HEAD_BG}`}>
                <th className="w-[41px] border-r border-[#0f2c66]" />
                <th className="w-[30px] border-r border-[#0f2c66]">
                  <span className="mx-auto block h-[12px] w-[12px] border-2 border-white bg-[#2a3f74]" />
                </th>
                {COLUMNS.map((col) => (
                  <th key={col.label} className={`whitespace-nowrap border-r border-[#0f2c66] font-normal ${col.w}`}>
                    {col.label}
                  </th>
                ))}
                <th className="whitespace-nowrap text-right font-normal">매출단가</th>
              </tr>
            </thead>
            <tbody>
              {ROWS.map((row, i) => (
                <tr key={row.cells[3]} className={`h-[22px] border-b border-[#b9c6da] ${i === 1 ? 'bg-[#b3c3dc] text-white' : ''}`}>
                  <td className="border-r border-[#8fb0de] bg-linear-to-r from-[#c6dafa] to-[#a5c4ef] pr-[3px] text-right text-black">
                    <span className="flex items-center justify-end gap-[3px]">
                      <span className={i === 1 ? '' : 'pr-[4px]'}>{i + 1}</span>
                      {i === 1 && (
                        <svg viewBox="0 0 4 8" className="h-2 w-1"><path d="M0 0v8l4-4z" fill="#0f2450" /></svg>
                      )}
                    </span>
                  </td>
                  <td className="border-r border-[#b9c6da]"><RowCheck checked={i === 1} label={`${row.cells[5]} 선택`} /></td>
                  {row.cells.map((cell, c) => (
                    <td
                      key={c}
                      className={`whitespace-nowrap border-r px-1 ${i === 1 ? 'border-[#b3c3dc]' : 'border-[#b9c6da]'} ${COLUMNS[c].align || ''} ${i === 1 && c === 5 ? 'bg-white text-black' : ''}`}
                    >
                      {COLUMNS[c].color ? (
                        <span className="flex items-center gap-[3px]">
                          <span className="h-4 w-4 border border-[#c3c3c3]" />
                          {cell}
                        </span>
                      ) : (
                        cell
                      )}
                    </td>
                  ))}
                  <td className="text-right">{row.price}</td>
                </tr>
              ))}
            </tbody>
          </table>
        </div>
        <div className="flex w-[14px] flex-col bg-[#cbdbe9]">
          <div className={`h-[26px] border-l border-[#0f2c66] ${HEAD_BG}`} />
          <div className="flex flex-1 flex-col items-center justify-between py-1">
            <svg viewBox="0 0 8 7" className="h-[7px] w-2"><path d="M0 7h8L4 0z" fill="#93a9cd" /></svg>
            <svg viewBox="0 0 8 7" className="h-[7px] w-2"><path d="M0 0h8L4 7z" fill="#93a9cd" /></svg>
          </div>
        </div>
      </div>
      <div className="flex h-[13px] shrink-0 items-center bg-[#cbdbe9]">
        <div className="h-full w-[40px] border-r border-[#8fb0de] bg-[#b4ccee]" />
        <svg viewBox="0 0 6 8" className="ml-[5px] mr-[3px] h-2 w-[6px]"><path d="M6 0v8L0 4z" fill="#23457f" /></svg>
        <div className="h-[11px] w-[403px] rounded-full border border-[#3a5f9e] bg-linear-to-b from-[#c3daf6] to-[#6f9bd8]" />
        <svg viewBox="0 0 6 8" className="ml-auto mr-4 h-2 w-[6px]"><path d="M0 0v8l6-4z" fill="#23457f" /></svg>
      </div>
    </div>
  );
}

function DocumentFrame() {
  return (
    <div className="ml-[3px] mr-[2px] flex min-h-0 flex-1 flex-col rounded-[4px] border border-[#46648f] bg-[#6b8cba] px-[5px] pb-1 pt-[5px]">
      <div className="flex min-h-0 flex-1 flex-col bg-[#f5f5f5]">
        <DocToolbar />
        <FilterBar />
        <div className="flex min-h-0 flex-1">
          <CategoryPanel />
          <div className="flex w-[10px] shrink-0 items-center justify-center bg-[#eeeeee]">
            <div className="h-[50px] w-[5px] border-x border-[#9f9f9f]" />
          </div>
          <ProductGrid />
        </div>
        <div className="mx-[2px] mt-[10px] flex h-[31px] shrink-0 items-center justify-between border border-b-0 border-[#7b7b7b] px-1">
          <button className="h-6 w-16 whitespace-nowrap border border-[#707070] bg-[#dcdcdc] text-[13px] leading-4">단가정보</button>
          <button className="h-6 w-[100px] whitespace-nowrap border border-[#707070] bg-[#dcdcdc] text-[13px] leading-4">구분선위치초기화</button>
        </div>
        <div className="flex h-6 shrink-0 items-center border-y border-[#7b7b7b] bg-[#e6e6e6] pl-2 text-[13px] leading-4">
          <span className="border-r border-[#8a8a8a] pr-2">총 자료수: 86</span>
          <span className="border-r border-[#8a8a8a] px-2">현재 자료수: 2</span>
          <span className="px-2">선택 자료수: 1</span>
        </div>
      </div>
    </div>
  );
}

/* wallpaper logos that show below the document frame */
function Wallpaper() {
  return (
    <div className="flex h-[3px] shrink-0 overflow-hidden pl-[135px]">
      {[0, 1, 2, 3, 4].map((n) => (
        <div key={n} className="w-[341px] shrink-0">
          <svg viewBox="0 0 70 3" className="block h-[3px] w-[70px]">
            <path d="M0 0h18l-4 3H0z" fill="#e07422" />
            <path d="M21 0l6 3h-6z" fill="#9ccb4b" />
            <path d="M50 0h18l-4 3H50z" fill="#123a78" />
          </svg>
        </div>
      ))}
    </div>
  );
}

function ProgressPanel() {
  return (
    <div className="absolute left-1/2 top-1/2 w-[630px] -translate-x-1/2 -translate-y-1/2 border-3 border-[#808080] bg-white px-3 pb-[18px] pt-[17px]">
      <p className="mb-[11px] pl-[5px] text-[13px] leading-4">상품삭제중...</p>
      <div role="progressbar" aria-valuenow={100} className="h-6 bg-[#06b025]" />
    </div>
  );
}

function MessageDialog() {
  return (
    <div
      role="alertdialog"
      className="absolute left-[849px] top-[333px] w-[394px] overflow-hidden rounded-lg border border-[#b4b4b4] bg-white shadow-[0_14px_36px_rgba(0,0,0,0.3)]"
    >
      <div className="flex h-[25px] items-center justify-end bg-[#f3f3f3] pr-[7px]">
        <button aria-label="닫기"><X className="h-4 w-4 text-[#8c8c8c]" strokeWidth={1.5} /></button>
      </div>
      <p className="flex h-[59px] items-center whitespace-nowrap pl-[11px] text-xs">
        해당 데이터가 「매출관리」에서 사용중이기 때문에 삭제할 수 없습니다.
      </p>
      <div className="flex h-[43px] items-start justify-end bg-[#f0f0f0] pr-[15px] pt-2">
        <button className="h-[23px] w-[75px] border border-b-2 border-r-2 border-b-[#696969] border-l-white border-r-[#696969] border-t-white bg-[#f0f0f0] text-xs leading-4">
          확인
        </button>
      </div>
    </div>
  );
}

function App() {
  return (
    <div className="relative flex h-screen flex-col overflow-hidden bg-white font-['Noto_Sans','Noto_Sans_CJK_KR',sans-serif] text-black">
      {/* Title bar */}
      <header className="flex h-[23px] shrink-0 items-center bg-[#f2f2f2] text-[#8c8c8c]">
        <svg viewBox="0 0 16 16" className="h-4 w-4">
          <rect width="16" height="16" rx="2" fill="#57b5e2" />
          <path d="M4 11a2.500 2.500 0 0 1 0-5 4 4 0 0 1 7.500-.5A3 3 0 0 1 12 11z" fill="#fff" />
          <path d="M8 6.500v5M6 8.500l2-2 2 2M4 13.500h8" fill="none" stroke="#cdeaf8" />
        </svg>
        <span className="whitespace-pre pl-[5px] text-xs leading-4">
          {'엠제이Soft 천년경영3 C/S  Ver.25.10.2.729  [OS: 윈도우 10 - 64비트]   http://mjsoft.co'}
        </span>
        <div className="ml-auto flex items-center gap-9 pr-[18px]">
          <button aria-label="최소화" className="h-px w-[10px] bg-[#8c8c8c]" />
          <button aria-label="이전 크기로">
            <svg viewBox="0 0 10 10" className="block h-[10px] w-[10px]">
              <path d="M0.500 2.500h7v7h-7zM2.500 .5h5.500a1.500 1.500 0 0 1 1.500 1.500v5.500" fill="none" stroke="#8c8c8c" />
            </svg>
          </button>
          <button aria-label="닫기">
            <svg viewBox="0 0 10 10" className="block h-[10px] w-[10px]">
              <path d="M0 0l10 10M10 0L0 10" stroke="#8c8c8c" />
            </svg>
          </button>
        </div>
      </header>

      {/* Menu bar */}
      <nav className="flex h-[19px] shrink-0 items-center border-b border-[#6e6e6e] bg-[#f5f5f5] pl-[6px] text-[13px] leading-4">
        {TITLE_MENUS.map((menu) => (
          <button key={menu.label} className={`whitespace-nowrap ${menu.gap}`}>{menu.label}</button>
        ))}
      </nav>

      <MainToolbar />

      <div className="flex min-h-0 flex-1">
        <SidePanel />
        <div className="flex w-[22px] shrink-0 items-start justify-center bg-[#eeeeee] pt-[2px]">
          <button aria-label="메뉴 접기" className="flex h-[19px] w-[19px] items-center justify-center rounded-full border border-[#333] bg-white">
            <ChevronLeft className="h-3 w-3" strokeWidth={4} />
          </button>
        </div>
        <main className="flex min-w-0 flex-1 flex-col bg-[linear-gradient(to_right,#e2e2e2_1px,transparent_1px),linear-gradient(to_bottom,#e2e2e2_1px,transparent_1px)] bg-[length:341px_208px]">
          <TabStrip />
          <DocumentFrame />
          <Wallpaper />
        </main>
      </div>

      {/* Status bar */}
      <footer className="flex h-[22px] shrink-0 items-center border-t border-[#8c8c8c] bg-[#e6e6e6] pl-px pt-px text-xs leading-4">
        <span className="border-r border-[#8a8a8a] pr-2">MJ DB 37 v:116 [32비트]</span>
        <span className="border-r border-[#8a8a8a] px-2">baekseong</span>
        <span className="border-r border-[#8a8a8a] px-2">[1] ADMIN</span>
        <span className="border-r border-[#8a8a8a] px-2">관리자</span>
        <span className="px-2">2인용</span>
      </footer>

      <ProgressPanel />
      <MessageDialog />
    </div>
  );
}

export default App;
